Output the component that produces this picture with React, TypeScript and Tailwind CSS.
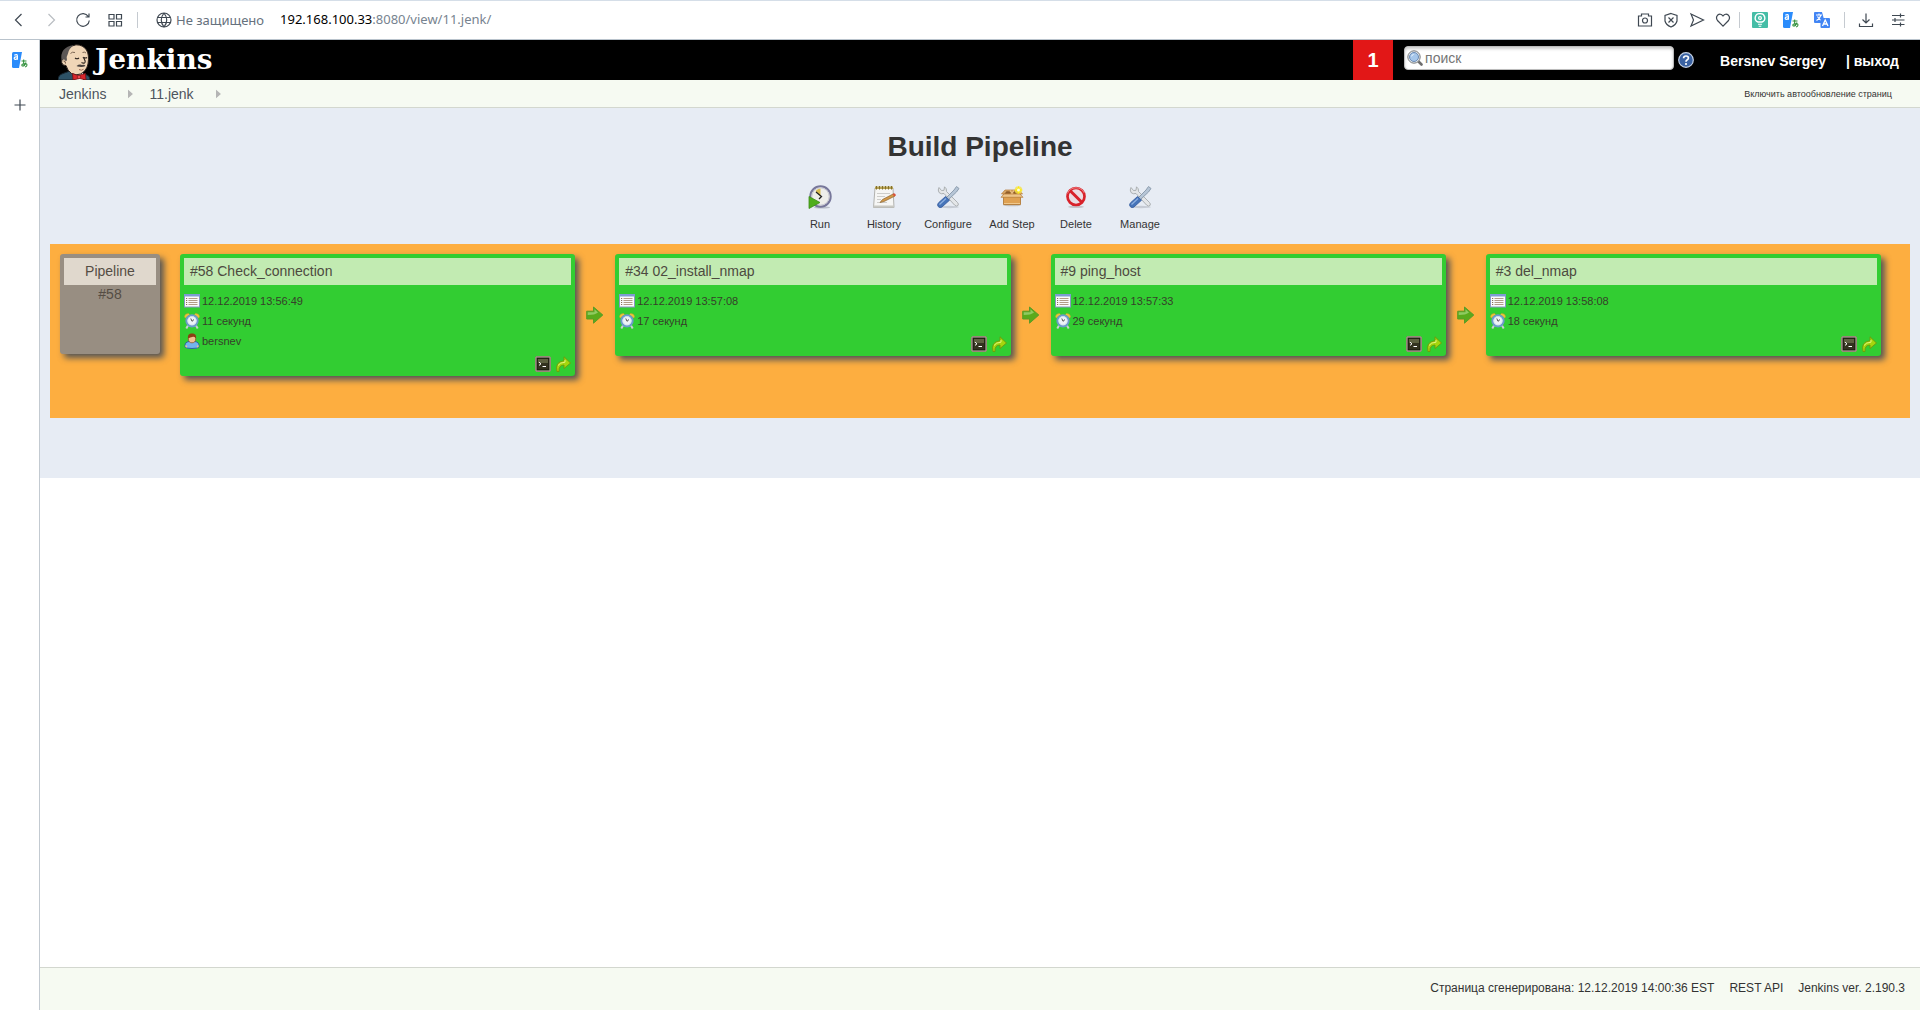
import React from "react";

const ARIAL = "font-['Liberation_Sans',Arial,sans-serif]";

type Build = { title: string; date: string; duration: string; user?: string };

const builds: Build[] = [
  { title: "#58 Check_connection", date: "12.12.2019 13:56:49", duration: "11 секунд", user: "bersnev" },
  { title: "#34 02_install_nmap", date: "12.12.2019 13:57:08", duration: "17 секунд" },
  { title: "#9 ping_host", date: "12.12.2019 13:57:33", duration: "29 секунд" },
  { title: "#3 del_nmap", date: "12.12.2019 13:58:08", duration: "18 секунд" },
];

/* ---------- browser icons ---------- */

function Line({ d, color = "#3f4852", className = "size-4" }: { d: string; color?: string; className?: string }) {
  return (
    <svg viewBox="0 0 16 16" className={className} fill="none" stroke={color} strokeWidth="1.2">
      <path d={d} />
    </svg>
  );
}

function TranslateIcon() {
  return (
    <svg viewBox="0 0 16 16" className="size-4">
      <path d="M1.500 0H10L7 16H1.500Q0 16 0 14.500V1.500Q0 0 1.500 0Z" fill="#2b8cfb" />
      <path d="M2.300 3.200Q5.300 1.800 5.400 4V7.800M5.300 5Q2.200 4.600 2.200 6.400Q3 8.200 5.300 6.500" fill="none" stroke="#fff" strokeWidth="1.200" />
      <path d="M9.500 9H14.500M11.700 7.500Q11.200 11.500 12.500 14M14 10.500Q12.500 14.500 10.300 14Q9 12.800 11 12Q15 11 15 13Q15 14.500 13 15" fill="none" stroke="#2f8f3a" strokeWidth="1.100" />
    </svg>
  );
}

function GoogleTranslateIcon() {
  return (
    <svg viewBox="0 0 16 16" className="size-4">
      <path d="M0 1Q0 0 1 0H8L11 11H1Q0 11 0 10Z" fill="#4285f4" />
      <path d="M2 3H8M5 1.500V3M7 3Q6 6.500 2.500 8.500M3.500 4.500Q4.500 7 7.500 8.500" fill="none" stroke="#fff" strokeWidth="1.100" />
      <rect x="6.500" y="6" width="9.500" height="10" rx="1" fill="#4285f4" />
      <path d="M8.500 14L11.200 8L14 14M9.500 12H13" fill="none" stroke="#fff" strokeWidth="1.300" />
    </svg>
  );
}

function LampIcon() {
  return (
    <svg viewBox="0 0 16 16" className="size-4">
      <rect width="16" height="16" rx="1" fill="#45bda6" />
      <path d="M8 1.700A4.300 4.300 0 0 1 10 10H6A4.300 4.300 0 0 1 8 1.700Z" fill="none" stroke="#fff" strokeWidth="1.400" />
      <circle cx="8" cy="6" r="1.400" fill="none" stroke="#fff" strokeWidth="1.200" />
      <path d="M6 12.300H10M6.700 14.300H9.300" stroke="#fff" strokeWidth="1.100" />
    </svg>
  );
}

/* ---------- Jenkins icons ---------- */

function JenkinsHead() {
  return (
    <svg viewBox="0 0 32 36" className="h-9 w-8 shrink-0">
      <path d="M0 36Q0 31 5 29.500L12 27L24 29L29 31Q32 32 32 36Z" fill="#2d5266" stroke="#16242e" />
      <path d="M14 28L17 36H25L25 28Z" fill="#fff" />
      <path d="M5.500 15Q3 15.500 3.700 18.500Q4.500 22 8 21.500Q9.500 27 13.500 29.500Q18 32 22.500 30Q28.500 27 30 20Q31.500 11 28.500 6Q25 .8 18 .8Q10 1.500 5.500 15Z" fill="#f0d6b7" stroke="#2a211c" strokeWidth="1" />
      <path d="M15.500 1.200Q9 1.800 5.500 6Q2.500 10 3.500 16.500Q6 14 7.500 17L9 16.500Q8 12.500 10 9.500Q10.500 5 15.500 1.200Z" fill="#5c5755" />
      <path d="M5.500 17Q7.500 16.500 7.500 19.500" fill="none" stroke="#6b4f3c" />
      <path d="M12.500 9.500Q14 7.500 17 8.500M24.500 8.500Q26.500 7.500 28 9" fill="none" stroke="#6f5a49" strokeWidth=".9" />
      <path d="M17 14Q19 15.500 21 14M26 13.500Q27.500 14.500 29 13.500M25 13Q28.500 18 26.500 19Q25 19.500 23.500 18.500" fill="none" stroke="#2a211c" strokeWidth="1.100" />
      <path d="M18.500 22Q21.500 19.800 24 21Q26.500 20.300 27.500 22Q24 23.300 22 22.700Q20 23 18.500 22Z" fill="#4a4340" />
      <path d="M21 25.500Q23.500 27 25.500 25.300" fill="none" stroke="#9a6a55" />
      <path d="M14.500 29.500L20 31.500L27.500 29.500L28 36L21.500 34.500L15 36Z" fill="#d8252b" stroke="#6d1014" strokeWidth=".8" />
      <circle cx="21" cy="33" r="1.800" fill="#ef4a4d" stroke="#6d1014" strokeWidth=".6" />
    </svg>
  );
}

function SearchGlass() {
  return (
    <svg viewBox="0 0 16 16" className="size-4 shrink-0">
      <path d="M11 11L14.500 14.500" stroke="#6e6e6e" strokeWidth="2.600" strokeLinecap="round" />
      <circle cx="7" cy="7" r="6.200" fill="#e8ecef" stroke="#77797b" />
      <circle cx="7" cy="7" r="4.500" fill="#a5c6ea" stroke="#6a89b3" />
      <path d="M4 7Q4.500 4 7.500 4Q5.500 5.500 4 7Z" fill="#eff7fd" />
    </svg>
  );
}

function HelpIcon() {
  return (
    <svg viewBox="0 0 16 16" className="size-4">
      <circle cx="8" cy="8" r="7.300" fill="#3a62a2" stroke="#c5d2e6" strokeWidth="1.200" />
      <path d="M5.600 6.300Q5.600 4 8 4Q10.400 4 10.400 6Q10.400 7.200 9 8Q8 8.600 8 9.700" fill="none" stroke="#fff" strokeWidth="1.700" />
      <circle cx="8" cy="12" r="1.100" fill="#fff" />
    </svg>
  );
}

function RunIcon() {
  return (
    <svg viewBox="0 0 24 24" className="size-6">
      <ellipse cx="14" cy="22.500" rx="8" ry="1" fill="#b9bec8" />
      <circle cx="12.500" cy="11.500" r="10.200" fill="#eeeeea" stroke="#77779a" strokeWidth="2" />
      <circle cx="12.500" cy="11.500" r="8.700" fill="none" stroke="#c4c4cf" />
      <path d="M12.500 11.500L7.500 6Q9.500 3.500 12.500 3.500Z" fill="#d9bd52" />
      <path d="M8 7L13.500 11.500L11 14" fill="none" stroke="#222" strokeWidth="1.300" />
      <path d="M1 11.500L12 17.500L1 23.500Z" fill="#4fae1c" stroke="#3f8d1a" strokeWidth=".8" />
    </svg>
  );
}

function HistoryIcon() {
  return (
    <svg viewBox="0 0 24 24" className="size-6">
      <path d="M3 3H21L22 22.500H1.500Z" fill="#f6f6f4" stroke="#b2b2ae" />
      <path d="M1.500 20.500H22V22.500H1.500Z" fill="#c8c8c3" />
      <rect x="3" y="1.500" width="18" height="2.500" fill="#b9a352" />
      <path d="M4.500 1V4.500M7.500 1V4.500M10.500 1V4.500M13.500 1V4.500M16.500 1V4.500M19.500 1V4.500" stroke="#82702c" />
      <path d="M5 8.500H18M5 11.500H13M5 14.500H9M5 17.500H15" stroke="#cdcdca" />
      <path d="M8 17.500L10.500 14.500L21.500 8.800L23 11L12 16.500Z" fill="#d39a48" stroke="#8c6430" strokeWidth=".7" />
      <path d="M20.500 9.200L22 8.300Q24 8.500 23.800 10.600L22.300 11.400Z" fill="#d9503a" />
    </svg>
  );
}

function ToolsIcon() {
  return (
    <svg viewBox="0 0 24 24" className="size-6">
      <ellipse cx="13" cy="22" rx="10" ry="1.200" fill="#c6cbd4" />
      <path d="M3 2.500Q1.500 5 3 7.500Q5 9.500 8 8.500L18.500 20Q20.500 22 22 20.500Q23 19 21.500 17.500L10.500 6.500Q11 3.500 8.500 1.800L8 5.300L5.500 5.500Z" fill="#e4e6e8" stroke="#a5a9ac" strokeWidth=".9" />
      <path d="M20.500 1.500L23 3.500L20.500 7L12 15L10 13L18 5Z" fill="#b6c5d6" stroke="#8696a8" strokeWidth=".9" />
      <path d="M9.500 11.500L13.500 15.200L6 22Q4 23.300 2.300 21.700Q0.800 20 2.300 18Z" fill="#4674b9" stroke="#3a60a0" strokeWidth=".9" />
      <path d="M10 13.500L3.500 19.500" stroke="#8fb2e2" strokeWidth="1.200" />
    </svg>
  );
}

function BoxIcon() {
  return (
    <svg viewBox="0 0 24 24" className="size-6">
      <ellipse cx="12" cy="20" rx="9" ry="1.300" fill="#c3c0bd" />
      <path d="M5 5H19L22.500 9H1.500Z" fill="#d9a766" stroke="#b47a33" strokeWidth=".7" />
      <path d="M6.500 6.200H17.500L19.500 8.800H4.500Z" fill="#8f5d2a" />
      <path d="M10 5.500L13 9M14 5.500L11 9" stroke="#e8bd80" strokeWidth="1.500" />
      <path d="M3.500 9.500H20.500V19.500H3.500Z" fill="#dfa152" stroke="#ad732d" strokeWidth=".8" />
      <path d="M1 12.300L4 9H20L23 12.300Z" fill="#edc48a" stroke="#b47a33" strokeWidth=".7" />
      <path d="M4 18.500H20" stroke="#f0c88c" />
      <circle cx="18.500" cy="5" r="3.800" fill="#f8e24a" opacity=".8" />
      <path d="M18.500 .8L19.600 3.900L22.700 5L19.600 6.100L18.500 9.200L17.400 6.100L14.300 5L17.400 3.900Z" fill="#fff200" />
      <circle cx="18.500" cy="5" r="1.500" fill="#fffde0" />
    </svg>
  );
}

function DeleteIcon() {
  return (
    <svg viewBox="0 0 24 24" className="size-6">
      <ellipse cx="12" cy="21.800" rx="8" ry="1.200" fill="#c6c3ca" />
      <circle cx="12" cy="11.500" r="8.300" fill="#eadde3" />
      <path d="M6.200 5.700L17.800 17.300" stroke="#d8222a" strokeWidth="3" />
      <circle cx="12" cy="11.500" r="8.500" fill="none" stroke="#d8222a" strokeWidth="2.700" />
      <path d="M3.500 8.500Q5.500 3 12 2.800Q18 3 20.300 8" fill="none" stroke="#ee7f83" strokeWidth="1" />
    </svg>
  );
}

function CalendarIcon() {
  return (
    <svg viewBox="0 0 16 16" className="size-4 shrink-0">
      <rect x=".5" y="1.500" width="15" height="12.500" fill="#fbfbfb" stroke="#8b97c4" />
      <rect x="0" y="1" width="16" height="2.500" fill="#7f9bd3" />
      <path d="M2 5.500H3.200M2 7.500H3.200M2 9.500H3.200M2 11.500H3.200" stroke="#8a6f5c" />
      <path d="M4.500 5.500H13.500M4.500 7.500H13.500M4.500 9.500H13.500M4.500 11.500H13.500" stroke="#b39c88" />
    </svg>
  );
}

function ClockIcon() {
  return (
    <svg viewBox="0 0 16 16" className="size-4 shrink-0">
      <path d="M.5 4Q.5 .5 4.500 .5L5.500 1.500L1.500 5ZM15.500 4Q15.500 .5 11.500 .5L10.500 1.500L14.500 5Z" fill="#efc63c" stroke="#c99c2a" strokeWidth=".5" />
      <path d="M4 12.500L2.300 15.500M12 12.500L13.700 15.500" stroke="#c9ced4" strokeWidth="2" />
      <circle cx="8" cy="7.800" r="5.600" fill="#fff" stroke="#6c9acb" strokeWidth="2.100" />
      <circle cx="8" cy="7.800" r="4.300" fill="#eef3f8" stroke="#bcd0e4" strokeWidth=".6" />
      <path d="M6.800 5.500L8 8.300L10 6.500" fill="none" stroke="#555" />
    </svg>
  );
}

function UserIcon() {
  return (
    <svg viewBox="0 0 16 16" className="size-4 shrink-0">
      <path d="M1 14Q.5 9 5 8.500H11Q15.500 9 15 14Q14 15.500 8 15.500Q2 15.500 1 14Z" fill="#74b4ee" stroke="#2e62a3" />
      <path d="M1 13Q2 11.500 3.300 13.500L2.500 14.800ZM15 13Q14 11.500 12.700 13.500L13.500 14.800Z" fill="#f0c090" />
      <ellipse cx="8" cy="5.500" rx="3.700" ry="4.300" fill="#f2c193" stroke="#8a4a1c" strokeWidth=".7" />
      <path d="M4 5.500Q3.200 .5 8 .5Q12.800 .5 12 5.500Q11 3.500 9 3.800Q6 4.500 4 5.500Z" fill="#8c3f14" />
    </svg>
  );
}

function ConsoleIcon() {
  return (
    <svg viewBox="0 0 16 16" className="size-4">
      <rect x=".5" y=".5" width="15" height="15" rx="1.500" fill="#d0c7b8" stroke="#978978" />
      <rect x="2" y="2" width="12" height="12" fill="#33331f" stroke="#17170c" />
      <rect x="3" y="3" width="10" height="4" fill="#5d6140" />
      <path d="M4 6.200L6 7.800L4 9.400M7.500 10.500H11" fill="none" stroke="#fff" />
    </svg>
  );
}

function RedoIcon() {
  return (
    <svg viewBox="0 0 16 16" className="size-4">
      <path d="M2 15.500Q-.5 6 9 4.700V.8L15.500 7L9 12.500V9Q3.500 9 4 15.500Z" fill="#a4d60e" stroke="#6d9a0c" strokeWidth=".9" />
      <path d="M3 9.500Q5 6.300 10 6.200V4" fill="none" stroke="#e2f27d" strokeWidth="1" />
    </svg>
  );
}

function ArrowIcon() {
  return (
    <svg viewBox="0 0 18 18" className="size-[18px]">
      <path d="M.7 5.200H7.500V1L16.800 9L7.500 17.200V13H.7Z" fill="#5aaa1c" stroke="#5b9a28" strokeWidth="1" />
      <path d="M1.700 6.200H8.500V3.200L12 6.500Q9 9 1.700 9Z" fill="#8fca62" />
    </svg>
  );
}

/* ---------- page parts ---------- */

function BrowserBar() {
  return (
    <div className="flex h-10 items-center border-t border-b border-t-[#d5dee8] border-b-[#b9c3cc] bg-white font-['Noto_Sans','Open_Sans',sans-serif] text-[13px]">
      <div className="flex items-center pl-[11px]">
        <button aria-label="Назад"><Line d="M10.500 2L4.500 8L10.500 14" /></button>
        <button aria-label="Вперёд" className="ml-4"><Line d="M5.500 2L11.500 8L5.500 14" color="#b9bdc2" /></button>
        <button aria-label="Обновить" className="ml-4"><Line d="M13.300 4.500A6.300 6.300 0 1 0 14.300 8.500M14 1.500V5H10.500" /></button>
        <button aria-label="Экспресс-панель" className="ml-4"><Line d="M2 2.500H7V7H2ZM9.500 2.500H14.500V7H9.500ZM2 9.500H7V14H2ZM9.500 9.500H14.500V14H9.500Z" /></button>
        <span className="ml-[14px] h-4 w-px bg-[#c5cad0]" />
        <span className="ml-[18px] flex items-center gap-1 text-[#66717d]">
          <Line d="M8 1A7 7 0 1 0 8 15A7 7 0 1 0 8 1ZM8 1Q2.500 8 8 15Q13.500 8 8 1M1.800 5.500H14.200M1.800 10.500H14.200" />
          <span className="pt-px">Не защищено</span>
        </span>
      </div>
      <div className="ml-4 grow text-[#77838f]">
        <span className="text-black">192.168.100.33</span>:8080/view/11.jenk/
      </div>
      <div className="flex items-center pr-[14px]">
        <button aria-label="Снимок"><Line d="M1.500 4H4.500V2H11.500V4H14.500V14H1.500ZM8 6A2.500 2.500 0 1 0 8 11A2.500 2.500 0 1 0 8 6" /></button>
        <button aria-label="Блокировка" className="ml-[10px]"><Line d="M8 1.500L14 3.500V9Q13 13 8 15Q3 13 2 9V3.500ZM5.500 5.500L10.500 10.500M10.500 5.500L5.500 10.500" /></button>
        <button aria-label="Отправить" className="ml-[10px]"><Line d="M2 2L14.500 8L2 14L4.500 8Z" /></button>
        <button aria-label="Закладки" className="ml-[10px]"><Line d="M8 14.200L2.500 8.500Q.5 5.500 2.500 3.300Q5.500 .8 8 4Q10.500 .8 13.500 3.300Q15.500 5.500 13.500 8.500Z" /></button>
        <span className="ml-2 h-4 w-px bg-[#c5cad0]" />
        <button aria-label="Lamp" className="ml-3"><LampIcon /></button>
        <button aria-label="Переводчик" className="ml-[15px]"><TranslateIcon /></button>
        <button aria-label="Google Translate" className="ml-[15px]"><GoogleTranslateIcon /></button>
        <span className="ml-[14px] h-4 w-px bg-[#c5cad0]" />
        <button aria-label="Загрузки" className="ml-[13px]"><Line d="M8 1.500V11M4.500 7.500L8 11L11.500 7.500M1.500 11.500V14.500H14.500V11.500" /></button>
        <button aria-label="Настройки" className="ml-4"><Line d="M2 3.500H14.500M2 8H14.500M2 12.500H14.500M10.500 1.500V5.500M5 6V10M10.500 10.500V14.500" /></button>
      </div>
    </div>
  );
}

const tools = [
  { label: "Run", icon: <RunIcon /> },
  { label: "History", icon: <HistoryIcon /> },
  { label: "Configure", icon: <ToolsIcon /> },
  { label: "Add Step", icon: <BoxIcon /> },
  { label: "Delete", icon: <DeleteIcon /> },
  { label: "Manage", icon: <ToolsIcon /> },
];

const cardShadow = "rounded-[3px] p-1 shadow-[4px_4px_6px_#555]";

function BuildCard({ build }: { build: Build }) {
  return (
    <div className={`flex flex-1 flex-col self-start bg-[#32cd32] text-[11px] text-[#36402a] ${cardShadow}`}>
      <a href="#" className="block bg-[#c2ebb2] px-1.5 text-sm leading-[27px] text-[#4d4a40]">{build.title}</a>
      <div className="mt-1.5 leading-5">
        <div className="flex items-center gap-0.5"><CalendarIcon />{build.date}</div>
        <div className="flex items-center gap-0.5"><ClockIcon />{build.duration}</div>
        {build.user && <div className="flex items-center gap-0.5"><UserIcon />{build.user}</div>}
      </div>
      <div className="mt-[5px] flex h-4 justify-end gap-1">
        <button aria-label="Console"><ConsoleIcon /></button>
        <button aria-label="Rerun"><RedoIcon /></button>
      </div>
    </div>
  );
}

export default function App() {
  return (
    <div className={`flex min-h-screen flex-col bg-white ${ARIAL}`}>
      <BrowserBar />
      <div className="flex grow">
        <aside className="flex w-10 shrink-0 flex-col items-center border-r border-[#c3cad1] bg-white pt-3">
          <button aria-label="Переводчик"><TranslateIcon /></button>
          <button aria-label="Добавить" className="mt-[29px]"><Line d="M8 2.500V13.500M2.500 8H13.500" /></button>
        </aside>
        <main className="flex min-w-0 grow flex-col">
          <header className="flex h-10 items-center bg-black text-white">
            <a href="#" className="flex h-10 items-end pl-[18px]">
              <JenkinsHead />
              <span className="ml-[5px] self-center font-['DejaVu_Serif','Liberation_Serif',serif] text-[28px] leading-9 font-bold">Jenkins</span>
            </a>
            <a href="#" className="ml-auto flex h-10 w-10 items-center justify-center bg-[#e21717] text-xl font-bold">1</a>
            <label className="mt-1.5 ml-[11px] flex h-6 w-[270px] items-center gap-0.5 self-start rounded-[4px] border border-[#bbb] bg-white pl-0.5 shadow-[inset_0_2px_3px_#ccc]">
              <SearchGlass />
              <input placeholder="поиск" aria-label="поиск" className="w-full bg-transparent text-sm text-black outline-none placeholder:text-[#757575]" />
            </label>
            <a href="#" aria-label="Help" className="ml-1"><HelpIcon /></a>
            <a href="#" className="mt-0.5 ml-[26px] text-sm font-bold">Bersnev Sergey</a>
            <a href="#" className="mt-0.5 mr-[21px] ml-5 text-sm font-bold">| выход</a>
          </header>
          <nav className="flex h-7 items-center border-b border-[#d3d7cf] bg-[#f6faf2] pl-[19px] text-sm text-[#4d545d]">
            <a href="#">Jenkins</a>
            <Line d="M0 4.500L4 8L0 11.500Z" color="#b5b5b5" className="ml-[22px] size-4 fill-[#b5b5b5]" />
            <a href="#" className="ml-[5px]">11.jenk</a>
            <Line d="M0 4.500L4 8L0 11.500Z" color="#b5b5b5" className="ml-[22px] size-4 fill-[#b5b5b5]" />
            <a href="#" className="mr-7 ml-auto pt-0.5 text-[9px] text-[#333]">Включить автообновление страниц</a>
          </nav>

          <section className="bg-[#e7ecf4] px-2.5 pb-[60px] text-[#333]">
            <h1 className="pt-5 text-center text-[28px] leading-[38px] font-bold">Build Pipeline</h1>
            <div className="mt-[19px] flex justify-center text-[11px]">
              {tools.map((t, i) => (
                <a key={i} href="#" className="flex w-16 flex-col items-center">
                  {t.icon}
                  <span className="mt-[7px] leading-4">{t.label}</span>
                </a>
              ))}
            </div>
            <div className="mt-3 flex bg-[#fdae40] pt-2.5 pr-[29px] pb-[42px] pl-2.5">
              <div className={`mr-5 h-[100px] w-[100px] shrink-0 bg-[#988e82] text-center text-sm text-[#554d44] ${cardShadow}`}>
                <div className="bg-[#e0d8cd] leading-[27px]">Pipeline</div>
                <div className="leading-[18px]">#58</div>
              </div>
              {builds.map((b, i) => (
                <React.Fragment key={b.title}>
                  {i > 0 && <div className="flex w-10 shrink-0 items-center pl-[11px]"><ArrowIcon /></div>}
                  <BuildCard build={b} />
                </React.Fragment>
              ))}
            </div>
          </section>

          <footer className="mt-auto flex h-[43px] justify-end gap-[15px] border-t border-[#d3d7cf] bg-[#f6faf2] pt-3 pr-[15px] text-xs text-[#333]">
            <span>Страница сгенерирована: 12.12.2019 14:00:36 EST</span>
            <a href="#">REST API</a>
            <a href="#">Jenkins ver. 2.190.3</a>
          </footer>
        </main>
      </div>
    </div>
  );
}
